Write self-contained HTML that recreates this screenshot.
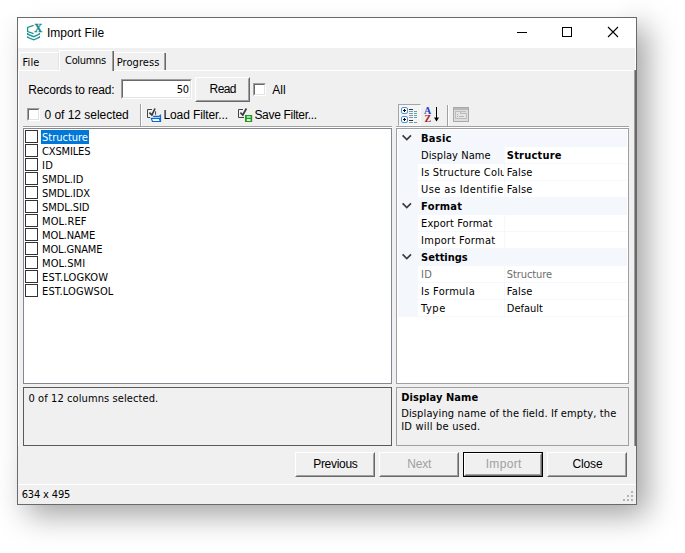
<!DOCTYPE html>
<html lang="en">
<head>
<meta charset="utf-8">
<title>Import File</title>
<style>
html,body{margin:0;padding:0;background:#fff;}
body{width:685px;height:553px;position:relative;overflow:hidden;font-family:"Liberation Sans",sans-serif;font-size:12px;color:#000;}
div,span,svg{position:absolute;box-sizing:border-box;}
.t{white-space:nowrap;line-height:16px;height:16px;}
.s{font-family:"Liberation Sans",sans-serif;font-size:12px;}
.h{font-family:"DejaVu Sans Condensed","DejaVu Sans","Liberation Sans",sans-serif;font-size:11px;}
#shadow{left:17px;top:17px;width:620px;height:488px;box-shadow:10px 10px 29px 0 rgba(0,0,0,.37);}
#win{left:17px;top:17px;width:620px;height:488px;background:#f0f0f0;border:1px solid #6a6a6a;}
#title{left:18px;top:18px;width:618px;height:30px;background:#fff;}
/* classic 3D button */
.btn{background:#f0f0f0;border:1px solid;border-color:#fff #696969 #696969 #fff;}
.btn:after{content:"";position:absolute;left:0;top:0;right:0;bottom:0;border:1px solid;border-color:#f0f0f0 #a0a0a0 #a0a0a0 #f0f0f0;}
/* sunken */
.sunk{background:#fff;border:1px solid;border-color:#a0a0a0 #fff #fff #a0a0a0;}
.sunk:after{content:"";position:absolute;left:0;top:0;right:0;bottom:0;border:1px solid;border-color:#696969 #e3e3e3 #e3e3e3 #696969;}
.cb{width:13px;height:13px;background:#fff;border:1px solid #333;}
</style>
</head>
<body>
<div id="shadow"></div>
<div style="left:0;top:0;width:685px;height:17px;background:linear-gradient(to bottom,rgba(255,255,255,.95),rgba(255,255,255,.62));-webkit-mask-image:linear-gradient(to right,#000 0,#000 615px,transparent 650px);mask-image:linear-gradient(to right,#000 0,#000 615px,transparent 650px)"></div>
<div id="leftfade" style="left:0;top:17px;width:17px;height:500px;background:rgba(255,255,255,.38);-webkit-mask-image:linear-gradient(to bottom,#000 0,#000 440px,transparent 495px);mask-image:linear-gradient(to bottom,#000 0,#000 440px,transparent 495px)"></div>
<div id="win"></div>
<div id="title"></div>
<!-- title icon -->
<svg style="left:26px;top:23px" width="18" height="18" viewBox="0 0 18 18">
<g fill="none" stroke="#1c9494" stroke-width="1.3" stroke-linejoin="miter">
<path d="M7.6 2.4 L1.6 4.5 L1.6 8.5 L7.6 10.6"/>
<path d="M1.6 10.1 L1.6 11.2 L7.7 13.7 L13.4 11.2 L13.4 10.1"/>
<path d="M1.6 13.2 L1.6 14.3 L7.7 16.8 L13.4 14.3 L13.4 13.2"/>
</g>
<text transform="translate(8.2 8.7) scale(0.9 1)" font-family="Liberation Serif, serif" font-weight="700" font-size="12.2" fill="#158a8a" stroke="#158a8a" stroke-width="0.3">X</text>
</svg>
<!-- window controls -->
<div style="left:517px;top:32px;width:10px;height:1px;background:#000"></div>
<div style="left:562px;top:27px;width:10px;height:10px;border:1px solid #000"></div>
<svg style="left:607px;top:26px" width="12" height="12" viewBox="0 0 12 12"><path d="M1 1 L11 11 M11 1 L1 11" stroke="#000" stroke-width="1.1" fill="none"/></svg>

<!-- tab control -->
<div style="left:18px;top:70px;width:618px;height:1px;background:#fff"></div>
<div style="left:18px;top:70px;width:1px;height:376px;background:#fff"></div>
<div style="left:634px;top:70px;width:1px;height:376px;background:#a0a0a0"></div>
<div style="left:635px;top:70px;width:1px;height:376px;background:#696969"></div>
<div style="left:635px;top:48px;width:1px;height:22px;background:#fff"></div>
<!-- File tab -->
<div style="left:19px;top:52px;width:40px;height:18px;border-top:1px solid #fff;border-left:1px solid #fff;border-right:1px solid #e3e3e3"></div>
<!-- Columns tab (selected) -->
<div style="left:59px;top:50px;width:55px;height:21px;background:#f0f0f0;border-top:1px solid #fff;border-left:1px solid #fff"></div>
<div style="left:112px;top:51px;width:1px;height:20px;background:#a0a0a0"></div>
<div style="left:113px;top:51px;width:1px;height:20px;background:#696969"></div>
<!-- Progress tab -->
<div style="left:114px;top:52px;width:50px;height:18px;border-top:1px solid #fff"></div>
<div style="left:164px;top:53px;width:1px;height:17px;background:#a0a0a0"></div>
<div style="left:165px;top:53px;width:1px;height:17px;background:#696969"></div>

<!-- records row -->
<div class="sunk" style="left:121px;top:79px;width:71px;height:20px"></div>
<div class="btn" style="left:195px;top:77px;width:55px;height:25px"></div>
<div class="sunk" style="left:253px;top:83px;width:13px;height:13px"></div>
<!-- filter row -->
<div class="sunk" style="left:27px;top:108px;width:13px;height:13px"></div>
<div style="left:140px;top:104px;width:1px;height:22px;background:#a0a0a0"></div>
<div style="left:141px;top:104px;width:1px;height:22px;background:#fff"></div>
<!-- load filter icon -->
<svg style="left:146px;top:107px" width="16" height="16" viewBox="0 0 16 16">
<path d="M6 2.5 H1.5 V10.5 H4" fill="none" stroke="#444" stroke-width="1"/>
<path d="M9.6 4.3 V7.8" fill="none" stroke="#444" stroke-width="1"/>
<path d="M3.4 5.7 L5.9 8 L9 1.5" fill="none" stroke="#3c3c3c" stroke-width="1.7"/>
<path d="M5.3 11.4 H13.4 L14.4 14.5 H6.5 Z" fill="#f4f8ff" stroke="#0b66d6" stroke-width="1.2" stroke-linejoin="miter"/>
<path d="M7.2 9.4 H13 L14.5 8.3 V14.8" fill="none" stroke="#0b66d6" stroke-width="1.2"/>
</svg>
<!-- save filter icon -->
<svg style="left:237px;top:107px" width="16" height="16" viewBox="0 0 16 16">
<path d="M6 2.5 H1.5 V10.5 H7" fill="none" stroke="#444" stroke-width="1"/>
<path d="M3.4 5.7 L5.8 8 L9.4 1.5" fill="none" stroke="#3c3c3c" stroke-width="1.7"/>
<rect x="8" y="8" width="7.2" height="7" fill="#209a20"/>
<rect x="9.8" y="9.3" width="3.8" height="1.3" fill="#f4fff4"/>
<rect x="9.8" y="12.1" width="3.8" height="1.8" fill="#f4fff4"/>
</svg>

<!-- listbox -->
<div style="left:23px;top:126px;width:369px;height:1px;background:#a0a0a0"></div>
<div style="left:23px;top:127px;width:369px;height:1px;background:#fff"></div>
<div style="left:23px;top:128px;width:369px;height:256px;background:#fff;border:1px solid #828790"></div>
<div style="left:41px;top:130px;width:48px;height:14px;background:#0078d7"></div>
<div class="cb" style="left:25px;top:130px"></div>
<div class="cb" style="left:25px;top:144px"></div>
<div class="cb" style="left:25px;top:158px"></div>
<div class="cb" style="left:25px;top:172px"></div>
<div class="cb" style="left:25px;top:186px"></div>
<div class="cb" style="left:25px;top:200px"></div>
<div class="cb" style="left:25px;top:214px"></div>
<div class="cb" style="left:25px;top:228px"></div>
<div class="cb" style="left:25px;top:242px"></div>
<div class="cb" style="left:25px;top:256px"></div>
<div class="cb" style="left:25px;top:270px"></div>
<div class="cb" style="left:25px;top:284px"></div>

<!-- status panel -->
<div style="left:23px;top:387px;width:369px;height:59px;border:1px solid #5a5a5a"></div>

<!-- property grid toolbar -->
<div style="left:398px;top:104px;width:23px;height:22px;background:#f5f5f5;border:1px solid;border-color:#a6a6a6 #fbfbfb #fbfbfb #a6a6a6"></div>
<svg style="left:401px;top:107px" width="16" height="16" viewBox="0 0 16 16" shape-rendering="crispEdges">
<rect x="0.5" y="0.5" width="6" height="6" rx="1.5" fill="#fff" stroke="#4a92e2" shape-rendering="auto"/>
<rect x="0.5" y="9.5" width="6" height="6" rx="1.5" fill="#fff" stroke="#4a92e2" shape-rendering="auto"/>
<rect x="2" y="3" width="3" height="1" fill="#000"/><rect x="3" y="2" width="1" height="3" fill="#000"/>
<rect x="2" y="12" width="3" height="1" fill="#000"/><rect x="3" y="11" width="1" height="3" fill="#000"/>
<rect x="5" y="5" width="1" height="1" fill="#e8d070"/><rect x="5" y="14" width="1" height="1" fill="#e8d070"/>
<rect x="8" y="2" width="4" height="1" fill="#333"/><rect x="8" y="13" width="4" height="1" fill="#333"/>
<g fill="#8d93c4"><rect x="8" y="4" width="2" height="1"/><rect x="8" y="6" width="2" height="1"/><rect x="8" y="8" width="2" height="1"/><rect x="8" y="10" width="2" height="1"/><rect x="8" y="15" width="2" height="1"/></g>
<g fill="#5fa3a3"><rect x="10" y="4" width="2" height="1"/><rect x="10" y="6" width="2" height="1"/><rect x="10" y="8" width="2" height="1"/><rect x="10" y="10" width="2" height="1"/><rect x="10" y="15" width="2" height="1"/>
<rect x="13" y="4" width="3" height="1"/><rect x="13" y="6" width="3" height="1"/><rect x="13" y="8" width="3" height="1"/><rect x="13" y="10" width="3" height="1"/><rect x="13" y="15" width="3" height="1"/></g>
</svg>
<svg style="left:423px;top:105px" width="18" height="20" viewBox="0 0 18 20">
<text x="0.9" y="8.9" font-family="Liberation Serif, serif" font-weight="700" font-size="10" fill="#2a3cc4">A</text>
<text x="1.4" y="16.9" font-family="Liberation Serif, serif" font-weight="700" font-size="10" fill="#a62626">Z</text>
<rect x="13" y="2" width="1" height="14" fill="#000" shape-rendering="crispEdges"/>
<path d="M11 12.5 L13.5 16.6 L16 12.5 Z" fill="#000"/>
</svg>
<div style="left:447px;top:105px;width:1px;height:21px;background:#a0a0a0"></div>
<div style="left:448px;top:105px;width:1px;height:21px;background:#fff"></div>
<svg style="left:453px;top:107px" width="16" height="15" viewBox="0 0 16 15" shape-rendering="crispEdges">
<rect x="0" y="0" width="16" height="15" fill="#a9a9a9"/>
<rect x="1" y="1" width="14" height="2" fill="#b9b9b9"/>
<rect x="1" y="3" width="14" height="11" fill="#dedede"/>
<path d="M2.5 4.5 H7.5 V6.5 H13.5 V11.5 H2.5 Z" fill="#e4e4e4" stroke="#bdbdbd" stroke-width="1"/>
<rect x="8" y="4" width="5" height="1" fill="#bdbdbd"/>
<rect x="4" y="7" width="1" height="1" fill="#a8a8a8"/><rect x="4" y="9" width="1" height="1" fill="#a8a8a8"/><rect x="6" y="9" width="5" height="1" fill="#b8b8b8"/>
</svg>

<!-- property grid -->
<div style="left:396px;top:126px;width:233px;height:1px;background:#a0a0a0"></div>
<div style="left:396px;top:127px;width:233px;height:1px;background:#fff"></div>
<div style="left:396px;top:128px;width:233px;height:256px;background:#fff;border:1px solid #a0a0a0"></div>
<div style="left:398px;top:130px;width:229px;height:187px;background:#f4f7fc"></div>
<!-- white cells -->
<div style="left:505px;top:147px;width:122px;height:16px;background:#fff"></div>
<div style="left:418px;top:164px;width:86px;height:16px;background:#fff"></div><div style="left:505px;top:164px;width:122px;height:16px;background:#fff"></div>
<div style="left:418px;top:181px;width:86px;height:16px;background:#fff"></div><div style="left:505px;top:181px;width:122px;height:16px;background:#fff"></div>
<div style="left:418px;top:215px;width:86px;height:16px;background:#fff"></div><div style="left:505px;top:215px;width:122px;height:16px;background:#fff"></div>
<div style="left:418px;top:232px;width:86px;height:16px;background:#fff"></div><div style="left:505px;top:232px;width:122px;height:16px;background:#fff"></div>
<div style="left:418px;top:266px;width:86px;height:16px;background:#fff"></div><div style="left:505px;top:266px;width:122px;height:16px;background:#fff"></div>
<div style="left:418px;top:283px;width:86px;height:16px;background:#fff"></div><div style="left:505px;top:283px;width:122px;height:16px;background:#fff"></div>
<div style="left:418px;top:300px;width:86px;height:16px;background:#fff"></div><div style="left:505px;top:300px;width:122px;height:16px;background:#fff"></div>
<!-- chevrons -->
<svg style="left:401px;top:134px" width="12" height="8" viewBox="0 0 12 8"><path d="M1.6 1.4 L5.8 5.6 L10 1.4" fill="none" stroke="#3c3c3c" stroke-width="1.7"/></svg>
<svg style="left:401px;top:202px" width="12" height="8" viewBox="0 0 12 8"><path d="M1.6 1.4 L5.8 5.6 L10 1.4" fill="none" stroke="#3c3c3c" stroke-width="1.7"/></svg>
<svg style="left:401px;top:253px" width="12" height="8" viewBox="0 0 12 8"><path d="M1.6 1.4 L5.8 5.6 L10 1.4" fill="none" stroke="#3c3c3c" stroke-width="1.7"/></svg>

<!-- description panel -->
<div style="left:396px;top:387px;width:233px;height:59px;border:1px solid #a0a0a0"></div>

<!-- buttons -->
<div class="btn" style="left:295px;top:452px;width:80px;height:25px"></div>
<div class="btn" style="left:379px;top:452px;width:80px;height:25px"></div>
<div style="left:463px;top:452px;width:80px;height:25px;background:#000"></div>
<div class="btn" style="left:464px;top:453px;width:78px;height:23px"></div>
<div class="btn" style="left:547px;top:452px;width:80px;height:25px"></div>

<!-- status bar -->
<div style="left:18px;top:484px;width:618px;height:1px;background:#fff"></div>
<svg style="left:622px;top:490px" width="12" height="12" viewBox="0 0 12 12" fill="#b4b4b4">
<rect x="9" y="1" width="2" height="2"/>
<rect x="5" y="5" width="2" height="2"/><rect x="9" y="5" width="2" height="2"/>
<rect x="1" y="9" width="2" height="2"/><rect x="5" y="9" width="2" height="2"/><rect x="9" y="9" width="2" height="2"/>
</svg>

<span class="t s" style="left:46.9px;top:25.0px;letter-spacing:0.05px;">Import File</span>
<span class="t h" style="left:22.5px;top:55.0px;letter-spacing:0.13px;">File</span>
<span class="t h" style="left:65.1px;top:53.0px;letter-spacing:-0.35px;">Columns</span>
<span class="t h" style="left:116.7px;top:55.0px;letter-spacing:0.07px;">Progress</span>
<span class="t s" style="left:28.3px;top:82.0px;letter-spacing:-0.16px;">Records to read:</span>
<span class="t h" style="left:176.8px;top:82.0px;letter-spacing:-0.40px;">50</span>
<span class="t s" style="left:209.6px;top:81.0px;letter-spacing:-0.60px;">Read</span>
<span class="t s" style="left:272.3px;top:82.0px;letter-spacing:0.02px;">All</span>
<span class="t s" style="left:44.5px;top:107.0px;letter-spacing:-0.03px;">0 of 12 selected</span>
<span class="t s" style="left:163.5px;top:107.0px;letter-spacing:-0.12px;">Load Filter...</span>
<span class="t s" style="left:254.4px;top:107.0px;letter-spacing:-0.31px;">Save Filter...</span>
<span class="t h" style="left:42.1px;top:130.0px;letter-spacing:-0.02px;color:#fff;">Structure</span>
<span class="t h" style="left:42.1px;top:144.0px;letter-spacing:-0.16px;">CXSMILES</span>
<span class="t h" style="left:42.1px;top:158.0px;letter-spacing:0.33px;">ID</span>
<span class="t h" style="left:42.1px;top:172.0px;letter-spacing:-0.08px;">SMDL.ID</span>
<span class="t h" style="left:42.1px;top:186.0px;letter-spacing:-0.07px;">SMDL.IDX</span>
<span class="t h" style="left:42.1px;top:200.0px;letter-spacing:-0.09px;">SMDL.SID</span>
<span class="t h" style="left:42.1px;top:214.0px;letter-spacing:0.10px;">MOL.REF</span>
<span class="t h" style="left:42.1px;top:228.0px;letter-spacing:-0.11px;">MOL.NAME</span>
<span class="t h" style="left:42.1px;top:242.0px;letter-spacing:-0.16px;">MOL.GNAME</span>
<span class="t h" style="left:42.1px;top:256.0px;letter-spacing:0.05px;">MOL.SMI</span>
<span class="t h" style="left:42.1px;top:270.0px;letter-spacing:0.16px;">EST.LOGKOW</span>
<span class="t h" style="left:42.1px;top:284.0px;letter-spacing:0.08px;">EST.LOGWSOL</span>
<span class="t h" style="left:421.1px;top:131.0px;letter-spacing:0.23px;font-weight:700;">Basic</span>
<span class="t h" style="left:421.1px;top:148.0px;letter-spacing:0.06px;">Display Name</span>
<span class="t h" style="left:506.8px;top:148.0px;letter-spacing:0.22px;font-weight:700;">Structure</span>
<span class="t h" style="left:421.1px;top:165.0px;letter-spacing:0.18px;width:82.9px;overflow:hidden;">Is Structure Column</span>
<span class="t h" style="left:506.8px;top:165.0px;letter-spacing:0.21px;">False</span>
<span class="t h" style="left:421.1px;top:182.0px;letter-spacing:0.38px;width:82.9px;overflow:hidden;">Use as Identifier</span>
<span class="t h" style="left:506.8px;top:182.0px;letter-spacing:0.21px;">False</span>
<span class="t h" style="left:421.1px;top:199.0px;letter-spacing:0.23px;font-weight:700;">Format</span>
<span class="t h" style="left:421.1px;top:216.0px;letter-spacing:0.08px;">Export Format</span>
<span class="t h" style="left:421.1px;top:233.0px;letter-spacing:0.27px;">Import Format</span>
<span class="t h" style="left:421.1px;top:250.0px;letter-spacing:-0.01px;font-weight:700;">Settings</span>
<span class="t h" style="left:421.1px;top:267.0px;letter-spacing:0.33px;color:#6d6d6d;">ID</span>
<span class="t h" style="left:506.8px;top:267.0px;letter-spacing:-0.09px;color:#6d6d6d;">Structure</span>
<span class="t h" style="left:421.1px;top:284.0px;letter-spacing:0.27px;">Is Formula</span>
<span class="t h" style="left:506.8px;top:284.0px;letter-spacing:0.21px;">False</span>
<span class="t h" style="left:421.1px;top:301.0px;letter-spacing:0.53px;">Type</span>
<span class="t h" style="left:506.8px;top:301.0px;letter-spacing:-0.01px;">Default</span>
<span class="t h" style="left:28.5px;top:391.0px;letter-spacing:0.09px;">0 of 12 columns selected.</span>
<span class="t h" style="left:401.2px;top:390.0px;letter-spacing:0.07px;font-weight:700;">Display Name</span>
<span class="t h" style="left:401.2px;top:406.0px;letter-spacing:0.13px;">Displaying name of the field. If empty, the</span>
<span class="t h" style="left:401.2px;top:419.0px;letter-spacing:0.22px;">ID will be used.</span>
<span class="t s" style="left:313.2px;top:456.0px;letter-spacing:-0.29px;">Previous</span>
<span class="t s" style="left:407.3px;top:456.0px;letter-spacing:-0.22px;color:#a0a0a0;">Next</span>
<span class="t s" style="left:485.7px;top:456.0px;letter-spacing:0.35px;color:#a0a0a0;">Import</span>
<span class="t s" style="left:572.6px;top:456.0px;letter-spacing:-0.16px;">Close</span>
<span class="t h" style="left:21.7px;top:487.0px;letter-spacing:-0.16px;">634 x 495</span>
</body>
</html>
